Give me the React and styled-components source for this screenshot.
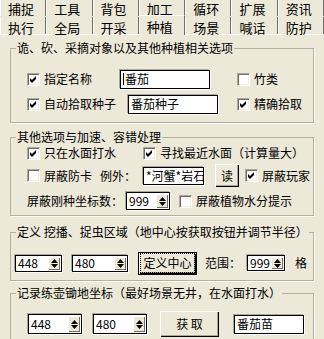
import styled, { createGlobalStyle } from "styled-components";

const GlobalStyle = createGlobalStyle`
  html, body {
    margin: 0;
    padding: 0;
    background: #ece9d8;
  }
  body {
    font: 12px/14px "Noto Sans CJK SC", "Noto Sans", sans-serif;
    color: #000;
  }
`;

const topTabs = ["捕捉", "工具", "背包", "加工", "循环", "扩展", "资讯"];
const bottomTabs = ["执行", "全局", "开采", "种植", "场景", "喊话", "防护"];

function CheckMark() {
  return (
    <svg width="7" height="7" viewBox="0 0 7 7">
      <path d="M0 2L2 4L6 0V3L2 7L0 5Z" fill="#000" />
    </svg>
  );
}

function Check({ checked, children }) {
  return (
    <CheckItem>
      <Box>{checked && <CheckMark />}</Box>
      <span>{children}</span>
    </CheckItem>
  );
}

function Arrow({ down }) {
  return (
    <svg width="7" height="4" viewBox="0 0 7 4">
      <path d={down ? "M0 0H7L3.5 4Z" : "M0 4H7L3.5 0Z"} fill="#000" />
    </svg>
  );
}

function Spin({ value, w, h }) {
  return (
    <SpinBox $w={w} $h={h}>
      <SpinValue>{value}</SpinValue>
      <SpinButtons>
        <SpinBtn>
          <Arrow />
        </SpinBtn>
        <SpinBtn>
          <Arrow down />
        </SpinBtn>
      </SpinButtons>
    </SpinBox>
  );
}

export default function App() {
  return (
    <Window>
      <GlobalStyle />
      <TabStrip>
        <TabRow $h={17}>
          {topTabs.map((t) => (
            <Tab key={t} $row="top">
              {t}
            </Tab>
          ))}
        </TabRow>
        <TabRow $h={18}>
          {bottomTabs.map((t) => (
            <Tab key={t} $row="bottom" $active={t === "种植"}>
              {t}
            </Tab>
          ))}
        </TabRow>
      </TabStrip>

      <Panel>
        <Group $mt={6} $pt={14} $pb={8}>
          <Legend>诡、砍、采摘对象以及其他种植相关选项</Legend>
          <Row $cols="93px 117px auto" $pl={16} $h={20}>
            <Check checked>指定名称</Check>
            <Field $w={90} $h={19}>
              <Caret />
              番茄
            </Field>
            <Check>竹类</Check>
          </Row>
          <Row $cols="101px 109px auto" $pl={16} $h={20} $mt={5}>
            <Check checked>自动拾取种子</Check>
            <Field $w={90} $h={19}>番茄种子</Field>
            <Check checked>精确拾取</Check>
          </Row>
        </Group>

        <Group $mt={7} $pt={0} $pb={5}>
          <Legend>其他选项与加速、容错处理</Legend>
          <Row $cols="116px auto" $pl={16} $h={18}>
            <Check checked>只在水面打水</Check>
            <Check checked>寻找最近水面（计算量大）</Check>
          </Row>
          <Row $cols="73px 43px 71px 31px auto" $pl={16} $h={25} $mt={1}>
            <Check>屏蔽防卡</Check>
            <Label>例外：</Label>
            <Field $w={61} $h={18}>*河蟹*岩石</Field>
            <Button $w={26} $h={25}>读</Button>
            <Check checked>屏蔽玩家</Check>
          </Row>
          <Row $cols="99px 53px auto" $pl={16} $h={18} $mt={4}>
            <Label>屏蔽刚种坐标数：</Label>
            <Spin value="999" w={44} h={18} />
            <Check>屏蔽植物水分提示</Check>
          </Row>
        </Group>

        <Group $mt={9} $pt={12} $pb={5}>
          <Legend>定义 挖播、捉虫区域（地中心按获取按钮并调节半径）</Legend>
          <Row $cols="57px 66px 67px 42px 48px auto" $pl={4} $h={24}>
            <Spin value="448" w={47} h={17} />
            <Spin value="480" w={56} h={17} />
            <Button $w={59} $h={23} $default>
              <Focus>定义中心</Focus>
            </Button>
            <Label>范围：</Label>
            <Spin value="999" w={38} h={16} />
            <Label>格</Label>
          </Row>
        </Group>

        <Group $mt={5} $pt={10} $pb={4}>
          <Legend>记录练壶锄地坐标（最好场景无井，在水面打水）</Legend>
          <Row $cols="65px 66px 75px auto" $pl={17} $h={28}>
            <Spin value="448" w={54} h={20} />
            <Spin value="480" w={54} h={20} />
            <Button $w={61} $h={28}>获 取</Button>
            <Field $w={70} $h={19}>番茄苗</Field>
          </Row>
        </Group>
      </Panel>
    </Window>
  );
}

const Window = styled.div`
  width: 324px;
  height: 339px;
  overflow: hidden;
  background: #ece9d8;
`;

const TabStrip = styled.div`
  height: 35px;
  box-sizing: border-box;
  border-bottom: 1px solid #fff;
`;

const TabRow = styled.div`
  display: grid;
  grid-template-columns: repeat(7, 1fr);
  height: ${(p) => p.$h}px;
`;

const Tab = styled.div`
  position: relative;
  box-sizing: border-box;
  height: ${(p) => (p.$active ? 20 : p.$row === "top" ? 16 : 17)}px;
  margin-top: ${(p) => (p.$active ? -2 : 0)}px;
  padding: ${(p) => (p.$row === "top" ? 2 : 4)}px 0 0 7px;
  border-left: 1px solid #fff;
  border-right: 1px solid #716f64;
  border-top: ${(p) => (p.$active ? "1px solid #fff" : "none")};
  background: #ece9d8;
  font-size: 13px;
  z-index: ${(p) => (p.$active ? 2 : 1)};
  white-space: nowrap;
`;

const Panel = styled.div`
  padding: 0 10px;
`;

const Group = styled.fieldset`
  margin: ${(p) => p.$mt}px 0 0;
  padding: ${(p) => p.$pt}px 0 ${(p) => p.$pb}px;
  border: 1px solid #b4b19f;
  box-shadow: 1px 1px 0 #fff;
  min-width: 0;
`;

const Legend = styled.legend`
  margin-left: 5px;
  padding: 0 1px;
  line-height: 14px;
  white-space: nowrap;
`;

const Row = styled.div`
  display: grid;
  grid-template-columns: ${(p) => p.$cols};
  align-items: center;
  height: ${(p) => p.$h}px;
  margin-top: ${(p) => p.$mt || 0}px;
  padding-left: ${(p) => p.$pl}px;
`;

const CheckItem = styled.label`
  display: flex;
  align-items: center;
  gap: 4px;
  white-space: nowrap;
`;

const Box = styled.span`
  display: inline-flex;
  align-items: center;
  justify-content: center;
  flex: none;
  box-sizing: border-box;
  width: 13px;
  height: 13px;
  background: #fff;
  border: 1px solid;
  border-color: #aca899 #fff #fff #aca899;
  box-shadow: inset 1px 1px 0 #716f64, inset -1px -1px 0 #f1efe2;
`;

const Label = styled.span`
  white-space: nowrap;
`;

const Field = styled.div`
  display: flex;
  align-items: center;
  box-sizing: border-box;
  width: ${(p) => p.$w}px;
  height: ${(p) => p.$h}px;
  padding-left: 2px;
  background: #fff;
  border: 1px solid #000;
  box-shadow: -1px -1px 0 #aca899, 1px 1px 0 #fff;
  white-space: nowrap;
  overflow: hidden;
`;

const Caret = styled.span`
  width: 1px;
  height: 12px;
  margin-right: 1px;
  background: #000;
`;

const SpinBox = styled.div`
  display: flex;
  box-sizing: border-box;
  width: ${(p) => p.$w}px;
  height: ${(p) => p.$h}px;
  background: #fff;
  border: 1px solid #000;
  box-shadow: -1px -1px 0 #aca899, 1px 1px 0 #fff;
`;

const SpinValue = styled.span`
  flex: 1;
  display: flex;
  align-items: center;
  padding-left: 2px;
`;

const SpinButtons = styled.div`
  display: flex;
  flex-direction: column;
  justify-content: center;
  gap: 1px;
  width: 12px;
  margin: 1px;
  background: #ece9d8;
  box-shadow: inset 1px 1px 0 #fff, inset -1px -1px 0 #716f64;
`;

const SpinBtn = styled.div`
  display: flex;
  align-items: center;
  justify-content: center;
  height: 4px;
`;

const Button = styled.div`
  display: flex;
  align-items: center;
  justify-content: center;
  box-sizing: border-box;
  width: ${(p) => p.$w}px;
  height: ${(p) => p.$h}px;
  background: #ece9d8;
  border: 1px solid ${(p) => (p.$default ? "#000" : "transparent")};
  box-shadow: inset 1px 1px 0 #fff, inset -1px -1px 0 #000,
    inset -2px -2px 0 #aca899;
  white-space: nowrap;
`;

const Focus = styled.span`
  padding: 1px 1px;
  outline: 1px dotted #000;
  outline-offset: 1px;
`;
